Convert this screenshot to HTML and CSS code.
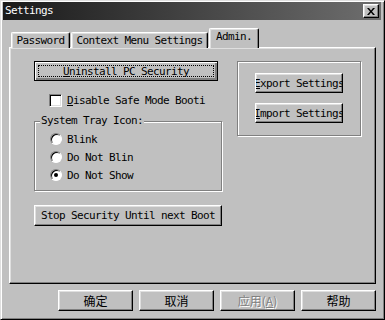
FILE: index.html
```html
<html>
    <head>
        <meta charset="utf-8">
        <title>Settings</title>
        <link rel="stylesheet" href="styles.css">
    </head>
    <body>
        <div class="window">
            <div class="titlebar">
                <span class="title">Settings</span>
                <span class="close">
                    <svg width="8" height="7" viewBox="0 0 8 7"><path d="M0 0h2l2 2.5 2-2.5h2l-3 3.5 3 3.5h-2l-2-2.5-2 2.5h-2l3-3.5z" fill="#000"/></svg>
                </span>
            </div>

            <div class="tabs">
                <div class="tab tab-password">Password</div>
                <div class="tab tab-context">Context Menu Settings</div>
                <div class="tab tab-admin active">Admin.</div>
            </div>

            <div class="panel">
                <div class="col-left">
                    <button class="btn default btn-uninstall" type="button"><span class="focus"><u>U</u>ninstall PC Security</span></button>

                    <label class="check">
                        <span class="box"></span>
                        <span class="check-text"><u>D</u>isable Safe Mode Booti</span>
                    </label>

                    <fieldset class="group tray">
                        <legend>System Tray Icon:</legend>
                        <div class="radios">
                            <label class="radio"><span class="dot"></span><span>Blink</span></label>
                            <label class="radio"><span class="dot"></span><span>Do Not Blin</span></label>
                            <label class="radio"><span class="dot checked"></span><span>Do Not Show</span></label>
                        </div>
                    </fieldset>

                    <button class="btn btn-stop" type="button">Stop Security Until next Boot</button>
                </div>

                <div class="group side">
                    <button class="btn btn-side" type="button"><span><u>E</u>xport Settings</span></button>
                    <button class="btn btn-side" type="button"><span><u>I</u>mport Settings</span></button>
                </div>
            </div>

            <div class="footer">
                <button class="btn btn-foot" type="button">确定</button>
                <button class="btn btn-foot" type="button">取消</button>
                <button class="btn btn-foot disabled" type="button">应用(<u>A</u>)</button>
                <button class="btn btn-foot" type="button">帮助</button>
            </div>
        </div>
    </body>
</html>
```

FILE: styles.css
```css
body {
    margin: 0;
    background: #c0c0c0;
}
.window {
    width: 385px;
    height: 320px;
    box-sizing: border-box;
    background: #c0c0c0;
    border: 1px solid;
    border-color: #dfdfdf #000 #000 #dfdfdf;
    box-shadow: inset 1px 1px #fff, inset -1px -1px #808080;
    padding: 1px 3px 0 2px;
    font-family: "DejaVu Sans Mono", monospace;
    font-size: 11px;
    letter-spacing: -0.62px;
    color: #000;
}
.titlebar {
    height: 18px;
    display: flex;
    align-items: center;
    justify-content: space-between;
    background: linear-gradient(to right, #1a1a1a, #6e6e6e);
}
.title {
    color: #fff;
    padding-left: 2px;
    line-height: 18px;
}
.close {
    width: 16px;
    height: 14px;
    box-sizing: border-box;
    margin-right: 2px;
    display: flex;
    align-items: center;
    justify-content: center;
    background: #c0c0c0;
    border: 1px solid;
    border-color: #fff #000 #000 #fff;
    box-shadow: inset -1px -1px #808080, inset 1px 1px #dfdfdf;
}

/* tabs */
.tabs {
    display: flex;
    align-items: flex-end;
    height: 20px;
    margin-top: 8px;
    padding-left: 8px;
    margin-bottom: -1px;
    position: relative;
    z-index: 1;
}
.tab {
    height: 16px;
    box-sizing: border-box;
    display: flex;
    align-items: center;
    justify-content: center;
    white-space: nowrap;
    border: 1px solid;
    border-bottom: none;
    border-color: #fff #000 #000 #fff;
    border-radius: 2px 2px 0 0;
    box-shadow: inset -1px 0 #808080, inset 1px 1px #dfdfdf;
    background: #c0c0c0;
}
.tab-password { width: 59px; }
.tab-context { width: 137px; margin-left: 1px; }
.tab-admin { width: 50px; margin-left: 1px; }
.tab.active {
    height: 20px;
    padding-bottom: 4px;
}

.panel {
    width: 367px;
    height: 237px;
    box-sizing: border-box;
    margin-left: 6px;
    border: 1px solid;
    border-color: #fff #000 #000 #fff;
    box-shadow: inset -1px -1px #808080, inset 1px 1px #dfdfdf;
    padding: 13px 0 0 24px;
    display: flex;
    align-items: flex-start;
}
.col-left {
    width: 188px;
    display: flex;
    flex-direction: column;
}

/* buttons */
.btn {
    font: inherit;
    letter-spacing: inherit;
    color: #000;
    background: #c0c0c0;
    box-sizing: border-box;
    border: 1px solid;
    border-color: #fff #000 #000 #fff;
    box-shadow: inset -1px -1px #808080, inset 1px 1px #dfdfdf;
    padding: 0;
    margin: 0;
    display: flex;
    align-items: center;
    justify-content: center;
    white-space: nowrap;
    overflow: hidden;
}
.btn.default {
    border-color: #000;
    box-shadow: inset 1px 1px #fff, inset -1px -1px #808080, inset -2px -2px #000;
    box-shadow: inset 1px 1px #fff, inset -2px -2px #808080;
}
.btn-uninstall {
    width: 184px;
    height: 20px;
    padding: 3px;
    align-items: stretch;
}
.focus {
    flex: 1;
    display: flex;
    align-items: center;
    justify-content: center;
    border: 1px dotted #000;
}
.btn-stop {
    width: 188px;
    height: 21px;
    margin-top: 14px;
}

/* checkbox */
.check {
    display: flex;
    align-items: center;
    margin-top: 13px;
    margin-left: 15px;
    height: 13px;
    white-space: nowrap;
}
.box {
    width: 13px;
    height: 13px;
    box-sizing: border-box;
    background: #fff;
    border: 1px solid;
    border-color: #808080 #fff #fff #808080;
    box-shadow: inset 1px 1px #000, inset -1px -1px #dfdfdf;
    margin-right: 5px;
    flex: none;
}

/* group boxes */
.group {
    box-sizing: border-box;
    border: 1px solid #808080;
    box-shadow: inset 1px 1px #fff, 1px 1px #fff;
}
.tray {
    margin: 8px 0 0 0;
    padding: 0;
    min-width: 0;
    height: 76px;
}
.tray legend {
    margin-left: 5px;
    padding: 0 1px;
    line-height: 12px;
    background: #c0c0c0;
}
.radios {
    padding: 3px 0 0 15px;
}
.radio {
    display: flex;
    align-items: center;
    height: 18px;
}
.dot {
    width: 12px;
    height: 12px;
    box-sizing: border-box;
    border-radius: 50%;
    background: #fff;
    border: 1px solid;
    border-color: #808080 #fff #fff #808080;
    box-shadow: inset 1px 1px #000;
    margin-right: 5px;
    display: flex;
    align-items: center;
    justify-content: center;
    flex: none;
}
.dot.checked::after {
    content: "";
    width: 4px;
    height: 4px;
    border-radius: 50%;
    background: #000;
}

.side {
    width: 124px;
    height: 75px;
    margin-left: 15px;
    padding: 11px 0 0 17px;
    display: flex;
    flex-direction: column;
    gap: 10px;
}
.btn-side {
    width: 88px;
    height: 20px;
}

/* footer */
.footer {
    width: 367px;
    margin-left: 6px;
    margin-top: 6px;
    display: flex;
    justify-content: flex-end;
    gap: 6px;
}
.btn-foot {
    width: 75px;
    height: 21px;
    font-family: "Noto Sans CJK SC", sans-serif;
    font-size: 12px;
    letter-spacing: 0;
}
.btn-foot.disabled {
    color: #808080;
    text-shadow: 1px 1px #fff;
}
```
